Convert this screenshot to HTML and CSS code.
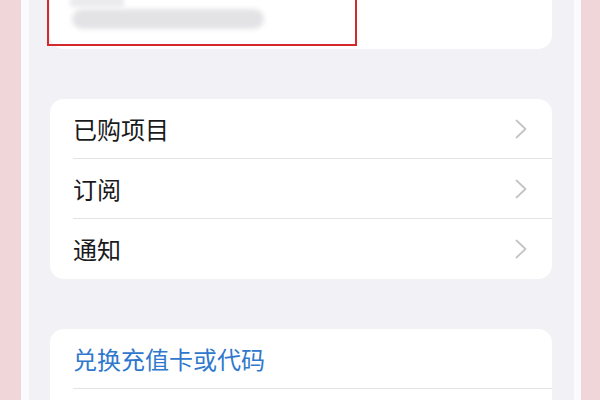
FILE: index.html
```html
<!DOCTYPE html>
<html lang="zh-CN">
<head>
<meta charset="utf-8">
<link rel="stylesheet" href="styles.css">
</head>
<body>
<div class="band pink-left"></div>
<div class="band white-left"></div>
<main class="screen">
  <section class="card card-top">
    <div class="blur-label"></div>
    <div class="blur-pill"></div>
    <div class="highlight"></div>
  </section>
  <section class="card list">
    <div class="row"><span class="label">已购项目</span><svg class="chev" viewBox="0 0 12 20"><path d="M1.5 1.5 L10.5 10 L1.5 18.5"/></svg></div>
    <div class="row"><span class="label">订阅</span><svg class="chev" viewBox="0 0 12 20"><path d="M1.5 1.5 L10.5 10 L1.5 18.5"/></svg></div>
    <div class="row"><span class="label">通知</span><svg class="chev" viewBox="0 0 12 20"><path d="M1.5 1.5 L10.5 10 L1.5 18.5"/></svg></div>
  </section>
  <section class="card list">
    <div class="row"><span class="label link">兑换充值卡或代码</span></div>
    <div class="row"></div>
  </section>
</main>
<div class="band white-right"></div>
<div class="band pink-right"></div>
</body>
</html>
```
FILE: styles.css
```css
html, body {
  margin: 0;
  padding: 0;
  width: 600px;
  height: 400px;
  overflow: hidden;
}
body {
  display: flex;
  font-family: "Noto Sans CJK SC", "Noto Sans", sans-serif;
  background: #f0d5d9;
}
.band { flex: none; height: 400px; }
.pink-left { width: 21px; background: #f0d5d9; }
.white-left { width: 8px; background: #fbfbfd; }
.white-right { width: 7px; background: #fbfbfd; }
.pink-right { width: 19px; background: #f0d5d9; }
.screen {
  flex: none;
  width: 545px;
  height: 400px;
  overflow: hidden;
  background: #f1f1f6;
  display: flex;
  flex-direction: column;
  gap: 50px;
  padding: 0 22px 0 21px;
  box-sizing: border-box;
}
.card {
  background: #ffffff;
  border-radius: 14px;
  flex: none;
}
.card-top {
  position: relative;
  height: 69px;
  margin-top: -20px;
}
.blur-label {
  position: absolute;
  left: 20px;
  top: 17px;
  width: 54px;
  height: 10px;
  background: #ebebee;
  filter: blur(2px);
}
.blur-pill {
  position: absolute;
  left: 22px;
  top: 29px;
  width: 192px;
  height: 20px;
  border-radius: 10px;
  background: #e3e3e6;
  filter: blur(2.5px);
}
.highlight {
  position: absolute;
  left: -3px;
  top: -4px;
  width: 306px;
  height: 66px;
  border: 2.5px solid #d3282c;
}
.list { overflow: hidden; }
.row {
  height: 60px;
  margin-left: 23px;
  padding-right: 25px;
  display: flex;
  align-items: center;
  justify-content: space-between;
  border-bottom: 1px solid #e4e4e7;
  box-sizing: border-box;
}
.row:last-child { border-bottom: none; }
.label {
  font-size: 24px;
  color: #1a1a1c;
  line-height: 1;
}
.link { color: #2f78cd; }
.chev {
  width: 12px;
  height: 20px;
  fill: none;
  stroke: #c4c4c8;
  stroke-width: 1.8;
  stroke-linecap: round;
  stroke-linejoin: round;
}
```
